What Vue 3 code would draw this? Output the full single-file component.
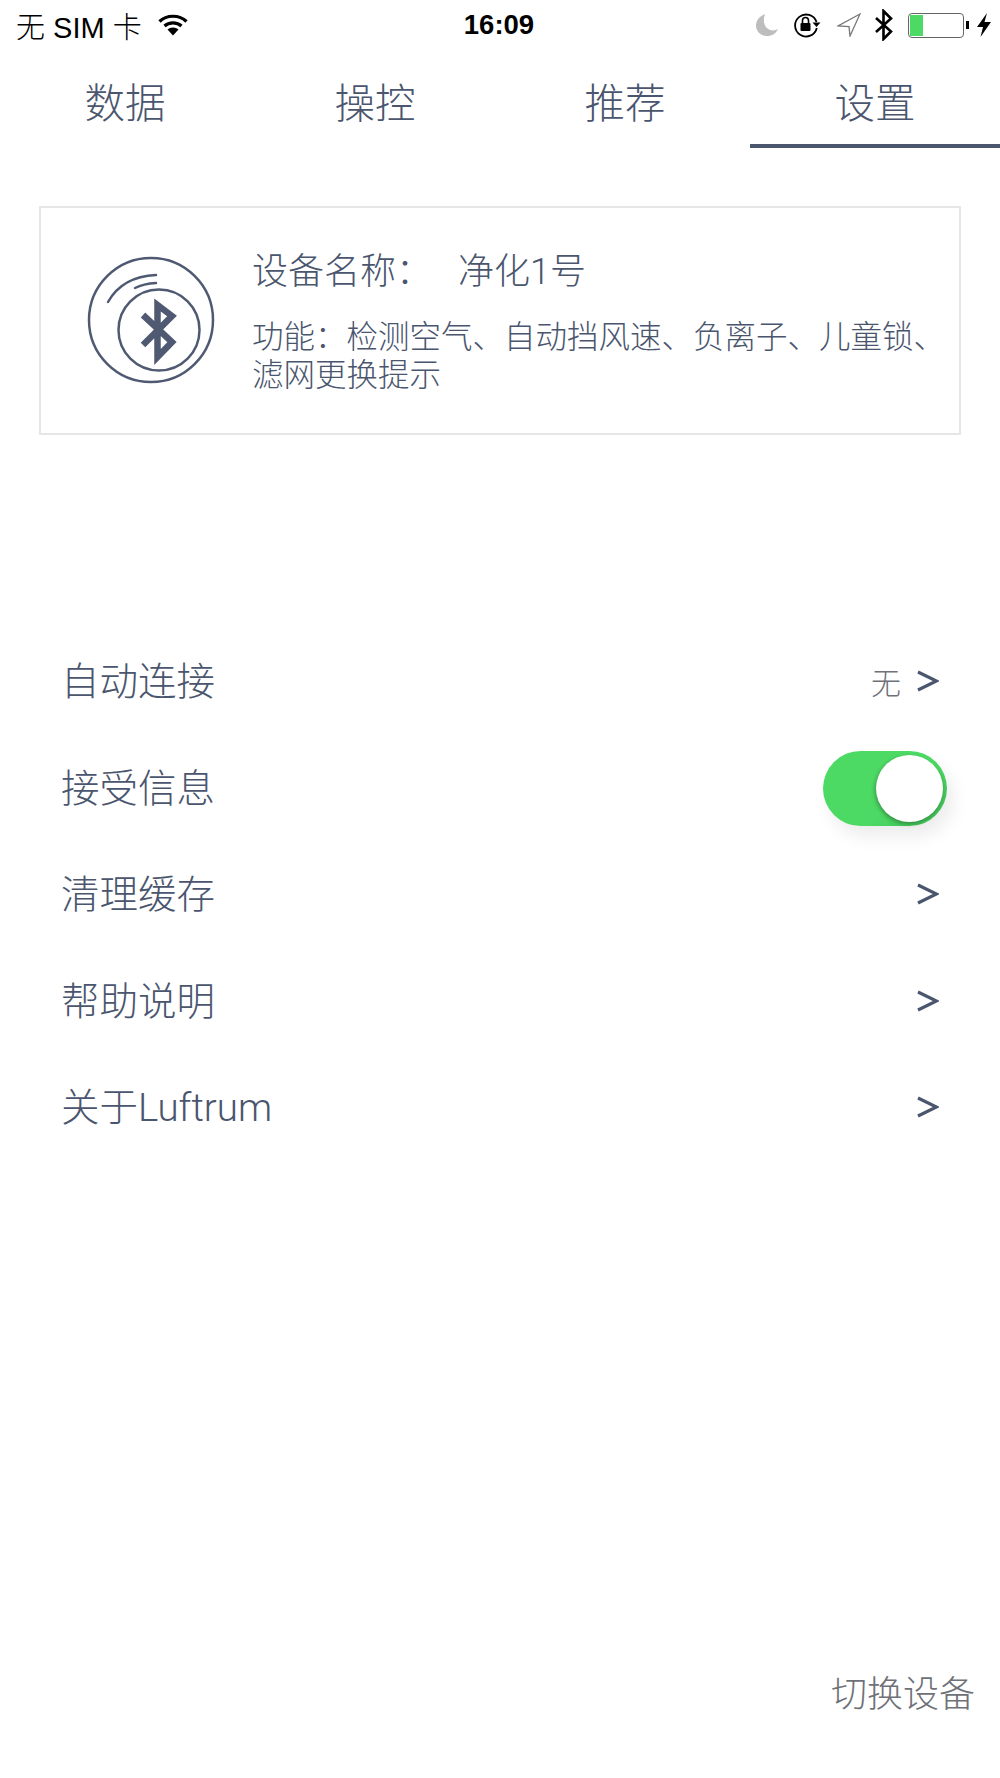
<script setup>
const tabs = ['数据', '操控', '推荐', '设置']
const rows = [
    { label: '自动连接', value: '无', arrow: true },
    { label: '接受信息', toggle: true },
    { label: '清理缓存', arrow: true },
    { label: '帮助说明', arrow: true },
    { label: '关于Luftrum', arrow: true }
]
</script>

<template>
    <div class="page">
        <div class="status">
            <div class="status-left">
                <span>无 SIM 卡</span>
                <svg class="wifi" width="30" height="24" viewBox="0 0 30 24">
                    <path d="M1.500 8.500C8.500 1.500 21.500 1.500 28.500 8.500" fill="none" stroke="#000" stroke-width="3.200" />
                    <path d="M6.500 13C11 8.800 19 8.800 23.500 13" fill="none" stroke="#000" stroke-width="3.200" />
                    <path d="M9.500 16.500C12.500 13.800 17.500 13.800 20.500 16.500L15 22.500Z" fill="#000" />
                </svg>
            </div>
            <div class="time">16:09</div>
            <div class="status-right">
                <svg width="24" height="24" viewBox="0 0 24 24">
                    <path d="M10 1C4.500 3 1 7.500 1 12.500C1 18.500 6 23 12 23C17 23 21 20.500 23 16C20 18 15.500 18 12.500 15.500C8.500 12.500 8 6 10 1Z" fill="#bdbdbd" />
                </svg>
                <svg class="lock" width="28" height="26" viewBox="0 0 28 26">
                    <path d="M23.500 10A11 11 0 1 0 23.800 16" fill="none" stroke="#000" stroke-width="1.800" />
                    <path d="M19.500 10.500H27.500L23.500 15Z" fill="#000" />
                    <rect x="7.500" y="11" width="10" height="8" rx="1" fill="#000" />
                    <path d="M9.500 11V8.500A3 3 0 0 1 15.500 8.500V11" fill="none" stroke="#000" stroke-width="1.600" />
                </svg>
                <svg class="arrow-up" width="24" height="24" viewBox="0 0 24 24">
                    <path d="M23 1L1 13L12 13.500L13 23Z" fill="none" stroke="#777" stroke-width="1.300" />
                </svg>
                <svg class="bt" width="20" height="32" viewBox="0 0 20 32">
                    <path d="M2 9L17 22.500L9.500 30V2L17 9.500L2 23" fill="none" stroke="#000" stroke-width="2.600" />
                </svg>
                <div class="battery"><div class="battery-fill"></div></div>
                <div class="nub"></div>
                <svg class="bolt" width="14" height="24" viewBox="0 0 14 24">
                    <path d="M10 0L0 14H6L3.500 24L14 9H7.500Z" fill="#000" />
                </svg>
            </div>
        </div>

        <div class="tabs">
            <div v-for="(tab, i) in tabs" :key="tab" class="tab" :class="{ active: i === 3 }">{{ tab }}</div>
        </div>

        <div class="card">
            <svg class="device-icon" width="130" height="130" viewBox="0 0 130 130">
                <g fill="none" stroke="#4f5a72">
                    <circle cx="65" cy="65" r="62" stroke-width="2.500" />
                    <circle cx="73" cy="75" r="40.500" stroke-width="2.500" />
                    <path d="M22 47C31 31 47 21 70 20" stroke-width="2.500" stroke-linecap="round" />
                    <path d="M49 33C55 30 62 28.500 70 28" stroke-width="2.500" stroke-linecap="round" />
                    <path d="M57 60L86 87L71.500 102V50L86 61L57 90" stroke-width="6.500" />
                </g>
            </svg>
            <div class="info">
                <div class="name"><span>设备名称：</span><span>净化1号</span></div>
                <div class="desc">功能：检测空气、自动挡风速、负离子、儿童锁、<br />滤网更换提示</div>
            </div>
        </div>

        <div class="list">
            <div v-for="row in rows" :key="row.label" class="row">
                <span class="label">{{ row.label }}</span>
                <div v-if="row.toggle" class="toggle"><div class="knob"></div></div>
                <div v-else class="row-right">
                    <span v-if="row.value" class="value">{{ row.value }}</span>
                    <svg v-if="row.arrow" width="22" height="24" viewBox="0 0 22 24">
                        <path d="M1 3L19.500 12L1 21" fill="none" stroke="#4a556e" stroke-width="3.200" />
                    </svg>
                </div>
            </div>
        </div>

        <div class="switch-device">切换设备</div>
    </div>
</template>

<style>
    html,
    body {
        margin: 0;
        background: #fff;
    }
</style>

<style scoped>
    .page {
        display: flex;
        flex-direction: column;
        width: 1000px;
        height: 1778px;
        overflow: hidden;
        background: #fff;
        color: #4a556e;
        font-family: Roboto, 'Noto Sans CJK SC', sans-serif;
        font-weight: 300;
    }

    .status {
        position: relative;
        display: flex;
        justify-content: space-between;
        align-items: center;
        height: 50px;
        color: #000;
        font-family: 'Liberation Sans', 'Noto Sans CJK SC', sans-serif;
        font-size: 29px;
    }
    .status-left {
        display: flex;
        align-items: center;
        margin-left: 16px;
    }
    .wifi {
        margin-left: 16px;
    }
    .time {
        position: absolute;
        left: 0;
        right: 0;
        text-align: center;
        font-weight: 700;
        font-size: 27.500px;
        margin-left: -2px;
    }
    .status-right {
        display: flex;
        align-items: center;
        margin-right: 9px;
    }
    .lock {
        margin-left: 14px;
    }
    .arrow-up {
        margin-left: 16px;
    }
    .bt {
        margin-left: 13px;
    }
    .battery {
        width: 52px;
        height: 21px;
        margin-left: 14px;
        border: 1px solid #666;
        border-radius: 4px;
        padding: 1px;
    }
    .battery-fill {
        width: 13px;
        height: 100%;
        background: #4cd964;
    }
    .nub {
        width: 3px;
        height: 8px;
        margin-left: 2px;
        background: #000;
    }
    .bolt {
        margin-left: 8px;
    }

    .tabs {
        display: flex;
        height: 98px;
    }
    .tab {
        flex: 1;
        text-align: center;
        font-size: 40.500px;
        line-height: 108px;
    }
    .tab.active {
        border-bottom: 4px solid #4a556e;
    }

    .card {
        display: flex;
        align-items: center;
        box-sizing: border-box;
        width: 922px;
        height: 229px;
        margin: 58px 0 0 39px;
        border: 2px solid #e6e6e6;
    }
    .device-icon {
        flex: none;
        margin: -2px 0 0 45px;
    }
    .info {
        margin: 4px 0 0 36px;
    }
    .name {
        display: flex;
        gap: 26px;
        font-size: 36px;
        line-height: 44px;
    }
    .desc {
        margin-top: 25px;
        font-size: 31.500px;
        line-height: 38px;
        white-space: nowrap;
    }

    .list {
        margin-top: 194px;
        padding: 0 53px 0 61px;
    }
    .row {
        display: flex;
        justify-content: space-between;
        align-items: center;
        height: 106.500px;
        font-size: 38.500px;
    }
    .label {
        margin-top: -8px;
    }
    .row-right {
        display: flex;
        align-items: center;
        margin-right: 8px;
        margin-top: -2px;
    }
    .value {
        margin-right: 16px;
        color: #6f7178;
        font-size: 30px;
    }
    .toggle {
        position: relative;
        width: 124px;
        height: 75px;
        border-radius: 38px;
        background: linear-gradient(135deg, #4cd964 60%, #3fb955);
        box-shadow: 6px 10px 18px rgba(0, 0, 0, 0.08);
    }
    .knob {
        position: absolute;
        top: 4px;
        right: 4px;
        width: 67px;
        height: 67px;
        border-radius: 50%;
        background: #fff;
        box-shadow: -1px 2px 4px rgba(0, 0, 0, 0.3);
    }

    .switch-device {
        margin-top: auto;
        margin-bottom: 61px;
        padding-right: 25px;
        text-align: right;
        color: #6f7178;
        font-size: 36px;
        line-height: 44px;
    }
</style>
